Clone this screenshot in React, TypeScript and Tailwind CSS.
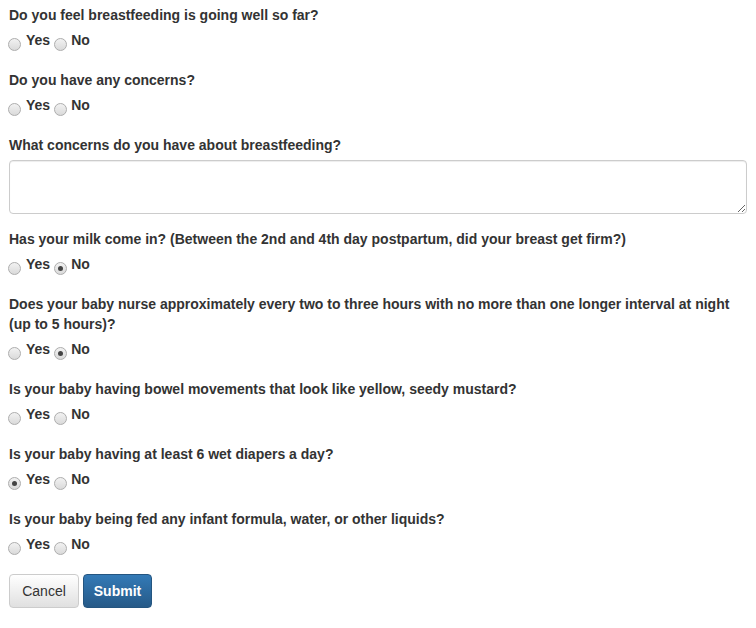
import React from "react";

type Q = { text: string; kind: "radio" | "text"; checked?: "yes" | "no" };

const questions: Q[] = [
  { text: "Do you feel breastfeeding is going well so far?", kind: "radio" },
  { text: "Do you have any concerns?", kind: "radio" },
  { text: "What concerns do you have about breastfeeding?", kind: "text" },
  {
    text: "Has your milk come in? (Between the 2nd and 4th day postpartum, did your breast get firm?)",
    kind: "radio",
    checked: "no",
  },
  {
    text: "Does your baby nurse approximately every two to three hours with no more than one longer interval at night (up to 5 hours)?",
    kind: "radio",
    checked: "no",
  },
  { text: "Is your baby having bowel movements that look like yellow, seedy mustard?", kind: "radio" },
  { text: "Is your baby having at least 6 wet diapers a day?", kind: "radio", checked: "yes" },
  { text: "Is your baby being fed any infant formula, water, or other liquids?", kind: "radio" },
];

function Radio({ checked }: { checked?: boolean }) {
  return (
    <span className="inline-flex items-center justify-center w-[13px] h-[13px] rounded-full border border-[#adadad] bg-gradient-to-b from-[#f2f2f2] to-[#dadada] translate-y-[4px] shrink-0">
      {checked && <span className="block w-[5px] h-[5px] rounded-full bg-[#444]" />}
    </span>
  );
}

export default function App() {
  return (
    <div
      className="bg-white text-[#333] text-[14px] leading-[20px] px-[9px] pt-[5px] pb-[20px] w-[756px]"
      style={{ fontFamily: '"Liberation Sans", Arial, sans-serif' }}
    >
      {questions.map((q, i) => (
        <div key={i} className={q.kind === "text" ? "mb-[15px]" : "mb-[20px]"}>
          <div className="font-bold mb-[5px]">{q.text}</div>
          {q.kind === "radio" ? (
            <div className="flex items-center h-[20px] font-bold -ml-px">
              <Radio checked={q.checked === "yes"} />
              <span className="ml-[5px]">Yes</span>
              <span className="ml-[4px] flex items-center">
                <Radio checked={q.checked === "no"} />
              </span>
              <span className="ml-[4px]">No</span>
            </div>
          ) : (
            <textarea
              rows={2}
              className="block w-full h-[54px] border border-[#ccc] rounded-[4px] px-[12px] py-[6px] shadow-[inset_0_1px_1px_rgba(0,0,0,0.075)] outline-none"
            />
          )}
        </div>
      ))}
      <div className="flex gap-[4px]">
        <button className="w-[70px] h-[34px] rounded-[4px] border border-[#ccc] bg-gradient-to-b from-white to-[#e0e0e0] text-[#333] text-[14px]">
          Cancel
        </button>
        <button className="w-[69px] h-[34px] rounded-[4px] border border-[#245580] bg-gradient-to-b from-[#337ab7] to-[#265a88] text-white font-bold text-[14px]">
          Submit
        </button>
      </div>
    </div>
  );
}
